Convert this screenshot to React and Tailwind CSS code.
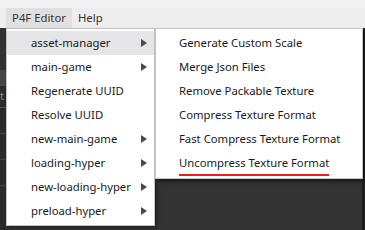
import React from "react";

const mainItems = [
  { label: "asset-manager", sub: true, active: true },
  { label: "main-game", sub: true },
  { label: "Regenerate UUID" },
  { label: "Resolve UUID" },
  { label: "new-main-game", sub: true },
  { label: "loading-hyper", sub: true },
  { label: "new-loading-hyper", sub: true },
  { label: "preload-hyper", sub: true },
];

const subItems = [
  "Generate Custom Scale",
  "Merge Json Files",
  "Remove Packable Texture",
  "Compress Texture Format",
  "Fast Compress Texture Format",
  "Uncompress Texture Format",
];

const Arrow = () => (
  <svg width="6" height="8" viewBox="0 0 6 8" className="shrink-0">
    <path d="M0 0 L6 4 L0 8 Z" fill="#4a4a4a" />
  </svg>
);

const App = () => {
  return (
    <div
      className="relative w-[365px] h-[230px] overflow-hidden bg-[#333333] text-[11.3px] text-[#1a1a1a]"
      style={{ fontFamily: '"Noto Sans", "Open Sans", sans-serif' }}
    >
      {/* title strip + menu bar */}
      <div className="h-[8px] bg-[#f2f2f5]" />
      <div className="flex h-[20px] items-stretch bg-[#eeeeee] pl-[6px]">
        <div className="flex w-[66px] items-center justify-center bg-[#e0e0e0] text-[#333]">P4F Editor</div>
        <div className="flex items-center px-[6px] text-[#333]">Help</div>
      </div>

      {/* editor remnants behind the menu */}
      <div className="flex h-[202px]">
        <div className="flex w-[6px] flex-col bg-[#2b2b2b]">
          <div className="h-[42px] bg-[#323232]" />
          <div className="h-[16px] bg-[#454545]" />
          <div className="h-[22px] border-b border-[#555] text-[11px] leading-[20px] text-[#888]">t</div>
          <div className="h-[26px] border-b border-[#444]" />
          <div className="h-[26px] border-b border-[#444]" />
          <div className="h-[26px] border-b border-[#444]" />
        </div>
        <div className="flex-1 bg-[#333333]" />
        <div className="w-[3px] bg-[#1f1f1f]" />
      </div>

      {/* main dropdown */}
      <div className="absolute left-[6px] top-[28px] w-[149px] border border-[#c4c4c4] bg-white py-[2px] shadow-[2px_2px_3px_rgba(0,0,0,0.35)]">
        {mainItems.map((it) => (
          <div
            key={it.label}
            className={`flex h-[24px] items-center justify-between pl-[24px] pr-[7px] ${
              it.active ? "bg-[#e5e5e8]" : ""
            }`}
          >
            <span>{it.label}</span>
            {it.sub && <Arrow />}
          </div>
        ))}
      </div>

      {/* submenu */}
      <div className="absolute left-[155px] top-[28px] w-[208px] border border-[#c4c4c4] bg-white pt-[2px] pb-[3px] shadow-[2px_3px_3px_rgba(0,0,0,0.45)]">
        {subItems.map((label, i) => (
          <div key={label} className="flex h-[24px] items-center pl-[23px]">
            <span className={i === 5 ? "relative" : ""}>
              {label}
              {i === 5 && (
                <span className="absolute left-0 right-0 top-[19px] h-[2px] bg-[#ee1c1c]" />
              )}
            </span>
          </div>
        ))}
      </div>
    </div>
  );
};

export default App;
